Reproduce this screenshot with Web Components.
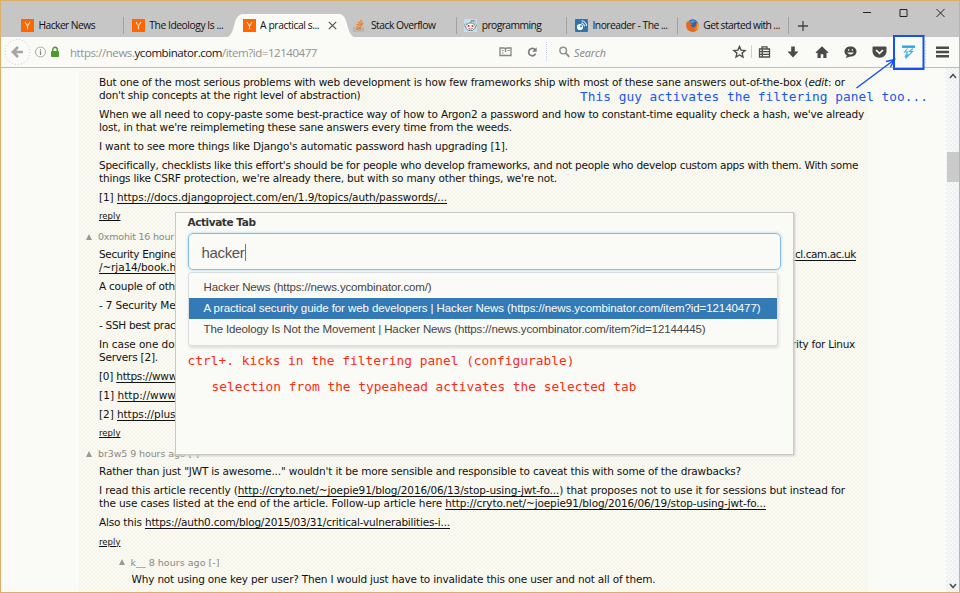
<!DOCTYPE html>
<html lang="en">
<head>
<meta charset="utf-8">
<title>Activate Tab</title>
<style>
html,body{margin:0;height:100%;overflow:hidden;background:#fafaf6}
</style>
</head>
<body>
<browser-window></browser-window>
<script>
// Base class: renders the static html of a subclass into an open shadow root.
class Base extends HTMLElement{
  constructor(){super();this.attachShadow({mode:'open'});}
  connectedCallback(){ if(!this.done){this.done=true;this.shadowRoot.innerHTML=this.render();this.after_();} }
  after_(){}
}
// One line of text, tracked so that it takes the width given in "w".
class FitLine extends Base{
  render(){return `<style>:host{display:block;white-space:pre;width:max-content}</style><slot></slot>`;}
  after_(){
    const w=parseFloat(this.getAttribute('w'));
    const n=this.textContent.length;
    if(!w||!n)return;
    const now=this.getBoundingClientRect().width;
    this.style.letterSpacing=((w-now)/n)+'px';
  }
}
customElements.define('fit-line',FitLine);

const icons={
y:`<svg width="13" height="13" viewBox="0 0 13 13"><path fill="#ff6600" d="M0 0h13v13H0z"/><path d="M4 3l2.5 4L9 3M6.5 7v3.3" fill="none" stroke="#ffe3cf" stroke-width="1.1"/></svg>`,
so:`<svg width="13" height="13" viewBox="0 0 13 13" fill="none"><path d="M1 8v4h9V8" stroke="#a9a9a9" stroke-width="1.2"/><path d="M2.8 10h5.4M2.9 7.8l5.3.8M3.5 5.2l5 2M5 2.8l4.2 3.4M7.5 1l2.5 4.5" stroke="#ee7d29" stroke-width="1.3"/></svg>`,
rd:`<svg width="13" height="13" viewBox="0 0 13 13"><path fill="#c5e0f2" d="M0 0h13v13H0z"/><path d="M6.5 4L7.4 1.5l2.5.7" fill="none" stroke="#666" stroke-width=".8"/><circle cx="10.2" cy="2.2" r="1" fill="#fff" stroke="#666" stroke-width=".6"/><circle cx="1.8" cy="6.3" r="1.4" fill="#fff" stroke="#777" stroke-width=".6"/><circle cx="11.2" cy="6.3" r="1.4" fill="#fff" stroke="#777" stroke-width=".6"/><ellipse cx="6.5" cy="7.8" rx="4.8" ry="3.8" fill="#fff" stroke="#666" stroke-width=".8"/><circle cx="4.6" cy="7" r="1.1" fill="#f03b19"/><circle cx="8.5" cy="7" r="1.1" fill="#f03b19"/><path d="M4.3 9.5q2.2 1.3 4.4 0" fill="none" stroke="#555" stroke-width=".8"/></svg>`,
ino:`<svg width="13" height="13" viewBox="0 0 13 13"><rect width="13" height="13" rx="1" fill="#2f74ae"/><circle cx="5" cy="8" r="3.1" fill="#fff"/><circle cx="6" cy="7.2" r="1" fill="#2f74ae"/><path d="M6.3 3.9a3.6 3.6 0 0 1 3.2 3.5M6.7 1.8a5.6 5.6 0 0 1 4.8 5.2" fill="none" stroke="#fff" stroke-width="1"/></svg>`,
fx:`<svg width="13" height="13" viewBox="0 0 13 13"><circle cx="6.7" cy="5.8" r="5.5" fill="#2768ac"/><path d="M4.5 2q3-2 5.5 1-2-.3-3 .7l-2 .3z" fill="#3fa3dc"/><path d="M1 2.2L2.3 3Q3.6 2 5 2.5 3.8 3.6 4.8 4.6l1.8.2q-.2 1-1.5 1.3Q4.600 8 7 8.300q3.600-.3 3-5.300Q12.900 4.500 12.800 7q-.5 5.600-6.200 5.900Q.3 12.500.1 6.500.1 4 1 2.200z" fill="#e7671c"/><path d="M11.200 4.300q1.200 4.700-2.700 6.200 3 .2 4-3.200-.1-2-1.300-3z" fill="#fbc52b"/></svg>`
};
class BrowserTab extends Base{
  render(){
    const i=this.getAttribute('icon'),a=this.hasAttribute('active');
    return `<style>
    :host{display:flex;flex:none;align-items:center;box-sizing:border-box;width:110.800px;height:24px;padding:0 0 0 7.500px;position:relative;font:10.300px "Open Sans","Noto Sans",sans-serif;color:#111;line-height:17px}
    .sep{position:absolute;right:0;top:3px;width:1px;height:17px;background:#a2a2a2}
    .ic{width:13px;height:13px;flex:none;margin-right:4.500px;position:relative;z-index:2;display:block}
    .ic svg{display:block}
    .lab{position:relative;z-index:2;flex:none}
    .bg{position:absolute;left:-11px;top:0;z-index:1}
    .x{position:absolute;left:92.500px;top:7px;z-index:2}
    </style>${a?`<svg class="bg" width="134" height="24" viewBox="0 0 134 24"><path fill="#fafaf6" d="M0 24C6 23.500 8 20 10.500 10 12.500 2.500 15 0 20 0h94c5 0 7 2.500 9 10 2.500 10 4.500 13.500 11 14z"/></svg>`:''}<span class="ic">${icons[i]}</span><fit-line class="lab" w="${this.getAttribute('w')}">${this.getAttribute('label')}</fit-line>${this.hasAttribute('sep')?'<i class="sep"></i>':''}${a?`<svg class="x" width="9" height="9"><path d="M.8.8l7.400 7.400M8.200.8L.8 8.200" stroke="#555" stroke-width="1.200"/></svg>`:''}`;
  }
}
customElements.define('browser-tab',BrowserTab);

class TabStrip extends Base{
  render(){return `<style>
  :host{display:flex;flex:none;height:37px;box-sizing:border-box;padding:12.500px 0 0 12.500px;background:#c6c6c6;position:relative;border-top:1px solid #dcae66}
  .plus{margin:7px 0 0 9px}
  .win{position:absolute;right:14px;top:7px}
  </style>
  <browser-tab icon="y" label="Hacker News" w="56.500" sep></browser-tab>
  <browser-tab icon="y" label="The Ideology Is ..." w="74"></browser-tab>
  <browser-tab icon="y" label="A practical s..." w="59" active></browser-tab>
  <browser-tab icon="so" label="Stack Overflow" w="64.500" sep></browser-tab>
  <browser-tab icon="rd" label="programming" w="59.500" sep></browser-tab>
  <browser-tab icon="ino" label="Inoreader - The ..." w="75" sep></browser-tab>
  <browser-tab icon="fx" label="Get started with ..." w="76.500" sep></browser-tab>
  <svg class="plus" width="10" height="10"><path d="M5 0v10M0 5h10" stroke="#444" stroke-width="1.300"/></svg>
  <svg class="win" width="83" height="10" fill="none" stroke="#222" stroke-width="1"><path d="M1 4.500h8M38 1.500h7v7h-7zM74.500 1l8 8M82.500 1l-8 8"/></svg>`;}
}
customElements.define('tab-strip',TabStrip);

class NavBar extends Base{
  render(){return `<style>
  :host{display:grid;flex:none;grid-template-columns:69px 425px 55px 178px 1fr;align-items:center;height:31px;box-sizing:border-box;background:#fafaf6;border-bottom:1px solid #bcbcb8;font:11.500px "Open Sans","Noto Sans",sans-serif;color:#929292}
  svg{display:block}
  b{font-weight:400;color:#141414}
  .search{display:flex;align-items:center;gap:4px;font-size:10.800px;font-style:italic;color:#858585;padding-left:9px}
  .left{margin-left:3px}
  </style>
  <svg class="left" width="62" height="28" viewBox="4 38 62 28"><circle cx="17.500" cy="52" r="12.500" fill="none" stroke="#bfcbdc" stroke-dasharray="1 2"/><path d="M23 52H13.500M18 47l-5 5 5 5" fill="none" stroke="#a5a5a5" stroke-width="2.700"/><circle cx="40.500" cy="52" r="5" fill="none" stroke="#aaa"/><path d="M40.500 51v4M40.500 49v1.200" stroke="#888" stroke-width="1.200"/><rect x="51" y="51" width="8" height="6" rx=".8" fill="#4a9a2c"/><path d="M52.800 51v-1.500a2.200 2.200 0 0 1 4.400 0V51" fill="none" stroke="#4a9a2c" stroke-width="1.400"/></svg>
  <fit-line w="247">https://news.<b>ycombinator.com</b>/item?id=12140477</fit-line>
    <svg width="52" height="20" viewBox="495 42 52 20"><path d="M505.500 55.500h-5.500v-7.500h4q1.500 0 1.500 1 0-1 1.500-1h4v7.500zM505.500 49v3" fill="none" stroke="#848484" stroke-width="1.300"/><path d="M502 50.500h1.500M502 53h1.500M507.500 50.500h2" stroke="#848484"/><path d="M535.200 49.700a3.700 3.700 0 1 0 .5 4" fill="none" stroke="#7c7c7c" stroke-width="1.700"/><path d="M536.700 47.200v4.600h-4.600z" fill="#7c7c7c"/><path d="M546.500 42v20" stroke="#c2d0e0" stroke-dasharray="1 1"/></svg>
    <div class="search"><svg width="11" height="12" viewBox="0 0 11 12" fill="none" stroke="#929292"><circle cx="4.200" cy="4.500" r="3.300" stroke-width="1.500"/><path d="M6.700 7l3.600 3.800" stroke-width="1.900"/></svg><fit-line w="32">Search</fit-line></div>
    <svg width="230" height="28" viewBox="728 38 230 28"><g fill="none" stroke="#4e4e4e"><path d="M739.500 46.500l1.600 3.600 4 .4-3 2.600.9 4-3.500-2.100-3.500 2.100.9-4-3-2.600 4-.4z" stroke-width="1.400"/><path d="M759.500 49h10v8h-10zM762 49v-2.200h5V49M759.500 51.700h10M759.500 54.300h10M762.300 49v8" stroke-width="1.300"/></g>
    <path d="M751.500 45v13" stroke="#cfcfcf"/><path d="M791.200 46.500h3.600v5h3.700l-5.500 6-5.500-6h3.700z" fill="#4a4a4a"/>
    <path d="M815.500 52.500l6.500-6.300 6.500 6.300-1 .8-1-.9v5.500h-3.200v-3.700h-2.600v3.700H817.500v-5.500l-1 .9z" fill="#4a4a4a"/>
    <path d="M850.500 46.500c3.600 0 6 2.100 6 5 0 3-2.500 5.100-6 5.100l-4.800 1.400 1.200-2.400c-1.500-1-2.400-2.300-2.400-4.100 0-2.900 2.400-5 6-5z" fill="#4a4a4a"/><path d="M848 50h1.200M851.800 50h1.200" stroke="#fafaf6" stroke-width="1.400"/><path d="M847 52.400h7q-3.500 4-7 0z" fill="#fafaf6"/>
    <path d="M873.500 46.500h12q1 0 1 1v3.500c0 4-3 6.700-7 6.700s-7-2.700-7-6.700v-3.500q0-1 1-1z" fill="#4a4a4a"/><path d="M876 50l3.500 3.400L883 50" fill="none" stroke="#fafaf6" stroke-width="1.700"/>
    <path d="M902 46.700h13" stroke="#25a7e3" stroke-width="2.400"/><path d="M907.500 48.500l-3 3.500h3l-2.500 5M912.800 48.500l-3.300 3h3l-7 7 2.500-4.500" fill="none" stroke="#3cb3ea" stroke-width="1.100"/>
    <path d="M936 47.800h13M936 52h13M936 56.200h13" stroke="#4a4a4a" stroke-width="2.500"/><path d="M925.500 41v22" stroke="#c8d5e2" stroke-dasharray="1 2"/></svg>`;}
}
customElements.define('nav-bar',NavBar);

// A comment: header, slotted paragraphs and reply link.
class HnComment extends Base{
  render(){const w=this.getAttribute('by');return `<style>
  :host{display:block;font:10.500px/13px "DejaVu Sans",Verdana,sans-serif;color:#111}
  .head{display:flex;align-items:center;height:13px;margin-left:-13px;color:#898985;font-size:9.500px;line-height:13px;margin-bottom:4.500px}
  .head i{width:0;height:0;border:3.500px solid transparent;border-bottom:6px solid #999;border-top:0;margin-right:6px}
  .reply{margin-top:6.200px;font-size:8.500px;text-decoration:underline;height:13px}
  </style>${w?`<div class="head"><i></i><fit-line w="${this.getAttribute('w')}">${w}</fit-line></div>`:''}<slot></slot>${this.hasAttribute('noreply')?'':'<fit-line class="reply" w="21.500">reply</fit-line>'}`;}
}
customElements.define('hn-comment',HnComment);

class HnPage extends Base{
  render(){return `<style>
  :host{display:block;flex:1;overflow:hidden;padding:3px 0 0 78px;background:#fafaf6;box-sizing:border-box}
  main{box-sizing:border-box;width:789px;height:600px;padding:4.500px 0 0 20px;background-color:#fafaf4;background-image:radial-gradient(circle at 1px 1px,#efe6cf .5px,transparent .8px),radial-gradient(circle at 3px 3px,#f1ead8 .5px,transparent .8px);background-size:4px 4px}
  p{margin:0 0 6.200px}
  .gap{display:flex;justify-content:space-between;width:757px}
  u{text-underline-offset:1.500px;text-decoration-skip-ink:none}
  p:last-child{margin-bottom:0}
  hn-comment+hn-comment{margin-top:7px}
  </style><main>
  <hn-comment>
  <p><fit-line w="746">But one of the most serious problems with web development is how few frameworks ship with most of these sane answers out-of-the-box (<i>edit</i>: or</fit-line><fit-line w="261.500">don't ship concepts at the right level of abstraction)</fit-line></p>
  <p><fit-line w="765">When we all need to copy-paste some best-practice way of how to Argon2 a password and how to constant-time equality check a hash, we've already</fit-line><fit-line w="413">lost, in that we're reimplemeting these sane answers every time from the weeds.</fit-line></p>
  <p><fit-line w="409">I want to see more things like Django's automatic password hash upgrading [1].</fit-line></p>
  <p><fit-line w="759">Specifically, checklists like this effort's should be for people who develop frameworks, and not people who develop custom apps with them. With some</fit-line><fit-line w="458">things like CSRF protection, we're already there, but with so many other things, we're not.</fit-line></p>
  <p><fit-line w="348">[1] <u>https://docs.djangoproject.com/en/1.9/topics/auth/passwords/...</u></fit-line></p>
  </hn-comment>
  <hn-comment by="0xmohit 16 hour" w="76">
  <p><span class="gap"><fit-line w="77">Security Engine</fit-line><fit-line w="64"><u>.cl.cam.ac.uk</u></fit-line></span><fit-line w="77"><u>/~rja14/book.h</u></fit-line></p>
  <p><fit-line w="76">A couple of oth</fit-line></p>
  <p><fit-line w="76.500">- 7 Security Me</fit-line></p>
  <p><fit-line w="76.500">- SSH best prac</fit-line></p>
  <p><span class="gap" style="width:756px"><fit-line w="75.500">In case one do</fit-line><fit-line w="63">rity for Linux</fit-line></span><fit-line w="59">Servers [2].</fit-line></p>
  <p><fit-line w="78">[0] <u>https://www</u></fit-line></p>
  <p><fit-line w="77">[1] <u>http://www</u></fit-line></p>
  <p><fit-line w="76.500">[2] <u>https://plus</u></fit-line></p>
  </hn-comment>
  <hn-comment by="br3w5 9 hours ago [-]" w="101">
  <p><fit-line w="642">Rather than just "JWT is awesome..." wouldn't it be more sensible and responsible to caveat this with some of the drawbacks?</fit-line></p>
  <p><fit-line w="746">I read this article recently (<u>http://cryto.net/~joepie91/blog/2016/06/13/stop-using-jwt-fo...</u>) that proposes not to use it for sessions but instead for</fit-line><fit-line w="667">the use cases listed at the end of the article. Follow-up article here <u>http://cryto.net/~joepie91/blog/2016/06/19/stop-using-jwt-fo...</u></fit-line></p>
  <p><fit-line w="351">Also this <u>https://auth0.com/blog/2015/03/31/critical-vulnerabilities-i...</u></fit-line></p>
  </hn-comment>
  <hn-comment by="k__ 8 hours ago [-]" w="89" noreply style="margin-left:32.500px">
  <p><fit-line w="524">Why not using one key per user? Then I would just have to invalidate this one user and not all of them.</fit-line></p>
  </hn-comment>
  </main>`;}
}
customElements.define('hn-page',HnPage);

class ScrollBar extends Base{
  render(){return `<style>
  :host{display:flex;flex-direction:column;align-items:center;justify-content:space-between;flex:none;width:13px;padding:5px 0 3px;box-sizing:border-box;background-color:#f7f8f7;background-image:radial-gradient(circle at 1px 1px,#ccdce8 .5px,transparent .8px),radial-gradient(circle at 3px 3px,#d5e0e9 .5px,transparent .8px);background-size:4px 4px}
  div{width:12px;height:30px;background:#cacaca;margin-top:73px;margin-bottom:auto}
  svg{display:block}
  </style><svg width="8" height="6"><path d="M1 5l3-3.500L7 5" fill="none" stroke="#505050" stroke-width="1.600"/></svg><div></div><svg width="8" height="6"><path d="M1 1l3 3.500L7 1" fill="none" stroke="#505050" stroke-width="1.600"/></svg>`;}
}
customElements.define('scroll-bar',ScrollBar);

class TypeaheadPanel extends Base{
  render(){return `<style>
  :host{display:block;box-sizing:border-box;width:619px;height:243px;padding:3px 12px;background:#fafaf6;border:1px solid #c9cac5;box-shadow:1px 1px 2px #ccccc4;font:11.500px "Liberation Sans",Arial,sans-serif;color:#444}
  .t{font:bold 10.500px/12px "DejaVu Sans",sans-serif;color:#333}
  .in{display:flex;align-items:center;box-sizing:border-box;width:593px;height:37px;margin-top:5px;border:1px solid #86bce4;border-radius:5px;padding:2px 12px 0 13px;box-shadow:0 0 3px #a5d2ee;font-size:15px;color:#555}
  .in i{width:1px;height:17px;background:#777}
  .menu{box-sizing:border-box;width:590px;height:74px;margin-top:2px;padding-top:4px;border:1px solid #d6dce0;border-radius:3px;box-shadow:1px 2px 3px #ddd}
  .o{height:21px;line-height:21px;padding-left:15px}
  .sel{background:#337ab7;color:#fff}
  .r{font:12.800px/16px "DejaVu Sans Mono",monospace;color:#fb2c14}
  </style>
  <fit-line class="t" w="68">Activate Tab</fit-line>
  <div class="in"><fit-line w="43">hacker</fit-line><i></i></div>
  <div class="menu"><div class="o"><fit-line w="228">Hacker News (https://news.ycombinator.com/)</fit-line></div><div class="o sel"><fit-line w="557">A practical security guide for web developers | Hacker News (https://news.ycombinator.com/item?id=12140477)</fit-line></div><div class="o"><fit-line w="502">The Ideology Is Not the Movement | Hacker News (https://news.ycombinator.com/item?id=12144445)</fit-line></div></div>
  <fit-line class="r" w="387" style="margin-top:7px">ctrl+. kicks in the filtering panel (configurable)</fit-line>
  <fit-line class="r" w="425" style="margin:10px 0 0 24px">selection from the typeahead activates the selected tab</fit-line>`;}
}
customElements.define('typeahead-panel',TypeaheadPanel);

class CallOut extends Base{
  render(){return `<style>
  :host{display:block;font:12.800px/16px "DejaVu Sans Mono",monospace;color:#1a56f0}
  fit-line{position:absolute;left:580px;top:89px}
  svg{position:absolute;left:850px;top:30px}
  </style><fit-line w="348">This guy activates the filtering panel too...</fit-line>
  <svg width="80" height="62" viewBox="850 30 80 62" fill="none" stroke="#1450f5"><path d="M894 36h29.500v33H894z" stroke-width="2"/><path d="M856.500 88L894 60M886 61.500l8.500-2-4 7.500" stroke-width="1.500"/></svg>`;}
}
customElements.define('call-out',CallOut);

class BrowserWindow extends Base{
  render(){return `<style>
  :host{display:flex;flex-direction:column;width:960px;height:593px;position:relative;overflow:hidden;box-sizing:border-box;border:1px solid #dcae66;border-top:0}
  .view{display:flex;flex:1;min-height:0}
  typeahead-panel{position:absolute;left:173.500px;top:212px}
  call-out{position:absolute;left:-1px;top:0}
  </style><tab-strip></tab-strip><nav-bar></nav-bar><div class="view"><hn-page></hn-page><scroll-bar></scroll-bar></div><typeahead-panel></typeahead-panel><call-out></call-out>`;}
}
customElements.define('browser-window',BrowserWindow);
</script>
</body>
</html>
